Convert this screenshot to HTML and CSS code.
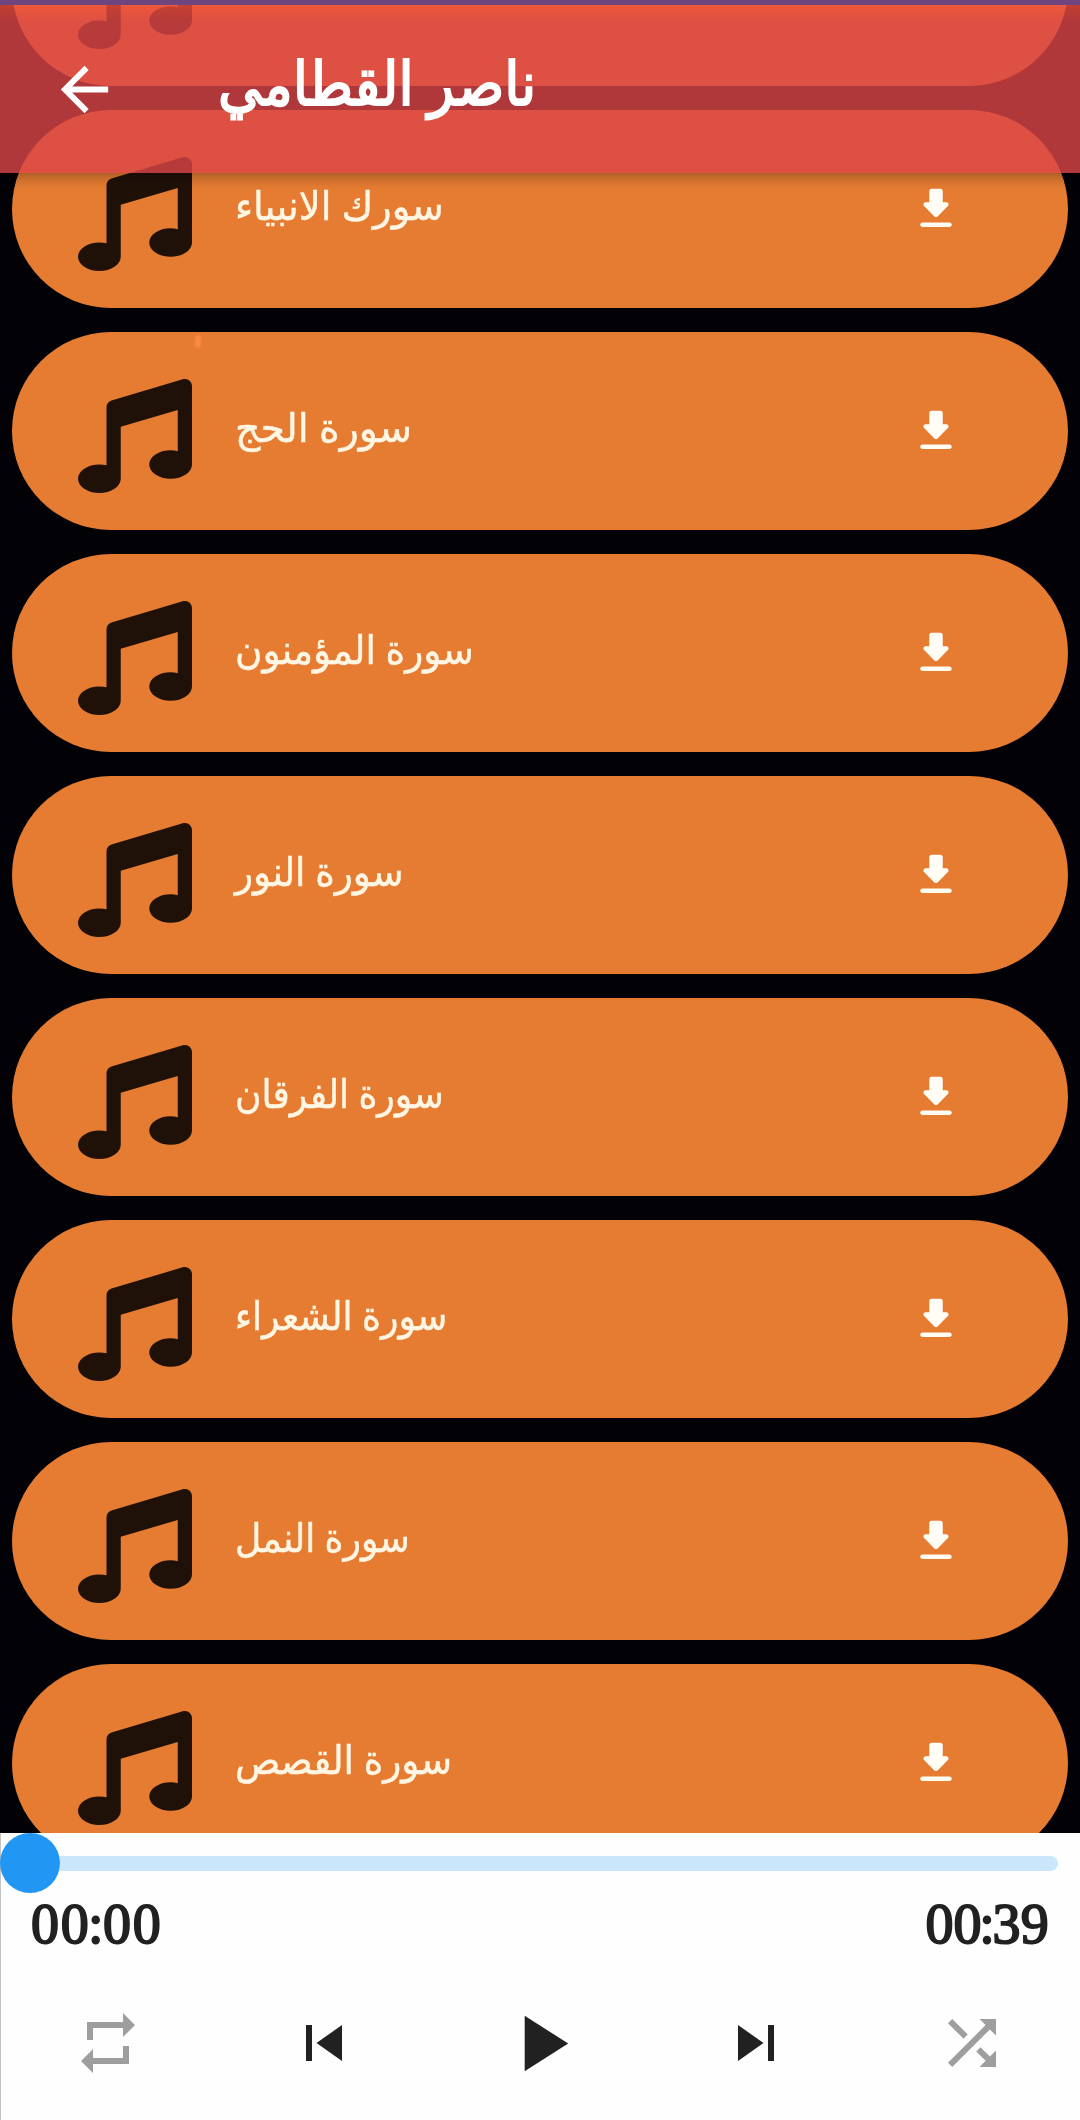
FILE: index.html
```html
<!DOCTYPE html>
<html lang="ar">
<head>
    <meta charset="UTF-8">
    <meta name="viewport" content="width=device-width, initial-scale=1.0">
    <title>ناصر القطامي</title>
    <link rel="stylesheet" href="styles.css">
</head>
<body>
    <!-- shared icons -->
    <svg class="sprite" aria-hidden="true">
        <symbol id="music" viewBox="0 0 512 512">
            <path d="M511.99 32.01c0-21.71-21.1-37.01-41.6-30.51L150.4 96c-13.3 4.2-22.4 16.5-22.4 30.5v261.42c-10.05-2.38-20.72-3.92-32-3.92-53.02 0-96 28.65-96 64s42.98 64 96 64 96-28.65 96-64V214.32l256-75.02v184.63c-10.05-2.38-20.72-3.92-32-3.92-53.02 0-96 28.65-96 64s42.98 64 96 64 96-28.65 96-64l-.01-351.99z"/>
        </symbol>
        <symbol id="download" viewBox="0 0 24 24">
            <path d="M16.59 9H15V4c0-.55-.45-1-1-1h-4c-.55 0-1 .45-1 1v5H7.41c-.89 0-1.34 1.08-.71 1.71l4.59 4.59c.39.39 1.02.39 1.41 0l4.59-4.59c.63-.63.19-1.71-.7-1.71zM5 19c0 .55.45 1 1 1h12c.55 0 1-.45 1-1s-.45-1-1-1H6c-.55 0-1 .45-1 1z"/>
        </symbol>
    </svg>

    <div class="app">
        <header class="app-bar">
            <svg class="back-icon" viewBox="0 0 24 24"><path d="M20 11H7.83l5.59-5.59L12 4l-8 8 8 8 1.41-1.41L7.83 13H20v-2z"/></svg>
            <h1 class="app-title" dir="rtl">ناصر القطامي</h1>
        </header>

        <main class="list">
            <div class="track">
                <svg class="track-icon"><use href="#music"/></svg>
            </div>
            <div class="track">
                <svg class="track-icon"><use href="#music"/></svg>
                <span class="track-name wide" dir="rtl">سورك الانبياء</span>
                <svg class="track-download"><use href="#download"/></svg>
            </div>
            <div class="track spark">
                <svg class="track-icon"><use href="#music"/></svg>
                <span class="track-name wider" dir="rtl">سورة الحج</span>
                <svg class="track-download"><use href="#download"/></svg>
            </div>
            <div class="track">
                <svg class="track-icon"><use href="#music"/></svg>
                <span class="track-name" dir="rtl">سورة المؤمنون</span>
                <svg class="track-download"><use href="#download"/></svg>
            </div>
            <div class="track">
                <svg class="track-icon"><use href="#music"/></svg>
                <span class="track-name" dir="rtl">سورة النور</span>
                <svg class="track-download"><use href="#download"/></svg>
            </div>
            <div class="track">
                <svg class="track-icon"><use href="#music"/></svg>
                <span class="track-name narrow" dir="rtl">سورة الفرقان</span>
                <svg class="track-download"><use href="#download"/></svg>
            </div>
            <div class="track">
                <svg class="track-icon"><use href="#music"/></svg>
                <span class="track-name narrow" dir="rtl">سورة الشعراء</span>
                <svg class="track-download"><use href="#download"/></svg>
            </div>
            <div class="track">
                <svg class="track-icon"><use href="#music"/></svg>
                <span class="track-name narrow" dir="rtl">سورة النمل</span>
                <svg class="track-download"><use href="#download"/></svg>
            </div>
            <div class="track">
                <svg class="track-icon"><use href="#music"/></svg>
                <span class="track-name" dir="rtl">سورة القصص</span>
                <svg class="track-download"><use href="#download"/></svg>
            </div>
        </main>

        <footer class="player">
            <div class="seek">
                <div class="seek-thumb"></div>
                <div class="seek-bar"></div>
            </div>
            <div class="times">
                <span class="time">00<span class="colon">:</span>00</span>
                <span class="time time-total">00<span class="colon">:</span>39</span>
            </div>
            <div class="controls">
                <svg class="muted" viewBox="0 0 24 24"><path d="M7 7h10v3l4-4-4-4v3H5v6h2V7zm10 10H7v-3l-4 4 4 4v-3h12v-6h-2v4z"/></svg>
                <svg viewBox="0 0 24 24"><path d="M6 6h2v12H6zm3.5 6l8.5 6V6z"/></svg>
                <svg class="play" viewBox="0 0 24 24"><path d="M8 5v14l11-7z"/></svg>
                <svg viewBox="0 0 24 24"><path d="M6 18l8.500-6L6 6v12zM16 6v12h2V6h-2z"/></svg>
                <svg class="muted" viewBox="0 0 24 24"><path d="M10.590 9.170L5.410 4 4 5.410l5.170 5.170 1.420-1.410zM14.500 4l2.040 2.040L4 18.590 5.410 20 17.960 7.460 20 9.500V4h-5.500zm.33 9.410l-1.410 1.410 3.130 3.130L14.500 20H20v-5.500l-2.040 2.040-3.130-3.130z"/></svg>
            </div>
        </footer>
    </div>
</body>
</html>
```

FILE: styles.css
```css
:root {
    --card-color: #e67c32;
    --bar-color: rgba(220, 69, 71, 0.8);
    --note-color: #1f1107;
    --text-color: #fff6e4;
    --blue: #2196f3;
    --dark: #212121;
}

* {
    margin: 0;
    padding: 0;
    box-sizing: border-box;
}

body {
    font-family: "Noto Sans", "DejaVu Sans", sans-serif;
    background-color: #020206;
}

.sprite {
    display: none;
}

.app {
    position: relative;
    display: flex;
    flex-direction: column;
    width: 1080px;
    height: 2120px;
    overflow: hidden;
}

/* translucent bar over the scrolled list */
.app-bar {
    position: absolute;
    top: 0;
    left: 0;
    z-index: 2;
    display: flex;
    align-items: center;
    width: 100%;
    height: 173px;
    padding: 1px 0 0 49px;
    border-top: 5px solid #6f4580;
    background: linear-gradient(rgba(240, 78, 60, 0.8), var(--bar-color) 16px) padding-box;
    box-shadow: 0 3px 14px rgba(0, 0, 0, 0.35);
}

.back-icon {
    width: 71px;
    height: 71px;
    fill: #fff;
}

.app-title {
    margin: 0 0 15px 98px;
    font-size: 60px;
    font-weight: 400;
    line-height: 1;
    color: #fff;
    white-space: nowrap;
    -webkit-text-stroke: 2px #fff;
    transform: scaleX(0.91);
    transform-origin: left;
}

.list {
    display: flex;
    flex-direction: column;
    gap: 24px;
    height: 1833px;
    padding: 0 12px;
    overflow: hidden;
}

.track {
    position: relative;
    display: flex;
    align-items: center;
    flex: none;
    height: 198px;
    padding: 10px 105px 0 66px;
    border-radius: 99px;
    background-color: var(--card-color);
}

/* the list is scrolled past its first row */
.track:first-child {
    margin-top: -112px;
}

.spark::before {
    content: "";
    position: absolute;
    top: 3px;
    left: 183px;
    width: 6px;
    height: 13px;
    border-radius: 3px;
    background-color: #fb8c42;
    filter: blur(1px);
}

.track-icon {
    width: 114px;
    height: 114px;
    fill: var(--note-color);
}

.track-name {
    margin: -18px 0 0 43px;
    font-size: 40px;
    line-height: 1;
    color: var(--text-color);
    white-space: nowrap;
    -webkit-text-stroke: 0.5px var(--text-color);
    transform: scaleX(0.935);
    transform-origin: left;
}

.track-name.narrow {
    transform: scaleX(0.903);
}

.track-name.wide {
    transform: scaleX(0.962);
}

.track-name.wider {
    transform: scaleX(0.985);
}

.track-download {
    width: 54px;
    height: 54px;
    margin: -10px 0 0 auto;
    fill: #fffdf4;
}

.player {
    flex: none;
    height: 287px;
    border-left: 1px solid #c4c4c4;
    background-color: #fefefe;
}

.seek {
    display: flex;
    align-items: center;
    height: 60px;
    margin-left: -1px;
    padding-right: 22px;
}

.seek-thumb {
    width: 60px;
    height: 60px;
    border-radius: 50%;
    background-color: var(--blue);
}

.seek-bar {
    flex: 1;
    height: 15px;
    border-radius: 0 8px 8px 0;
    background-color: #c9e6fb;
}

.times {
    display: flex;
    justify-content: space-between;
    padding: 0 31px 0 30px;
}

.time {
    font-family: "Liberation Serif", serif;
    font-size: 56px;
    line-height: 62px;
    letter-spacing: 1.8px;
    color: var(--dark);
    -webkit-text-stroke: 1.9px var(--dark);
}

.time-total {
    letter-spacing: 0.2px;
}

.colon {
    margin: 0 -2.5px;
}

.controls {
    display: grid;
    grid-template-columns: repeat(5, 216px);
    place-items: center;
    height: 96px;
    margin: 40px 0 0 -1px;
}

.controls svg {
    width: 72px;
    height: 72px;
    fill: var(--dark);
}

.controls .play {
    width: 95px;
    height: 95px;
}

.controls .muted {
    fill: #9e9e9e;
}
```
